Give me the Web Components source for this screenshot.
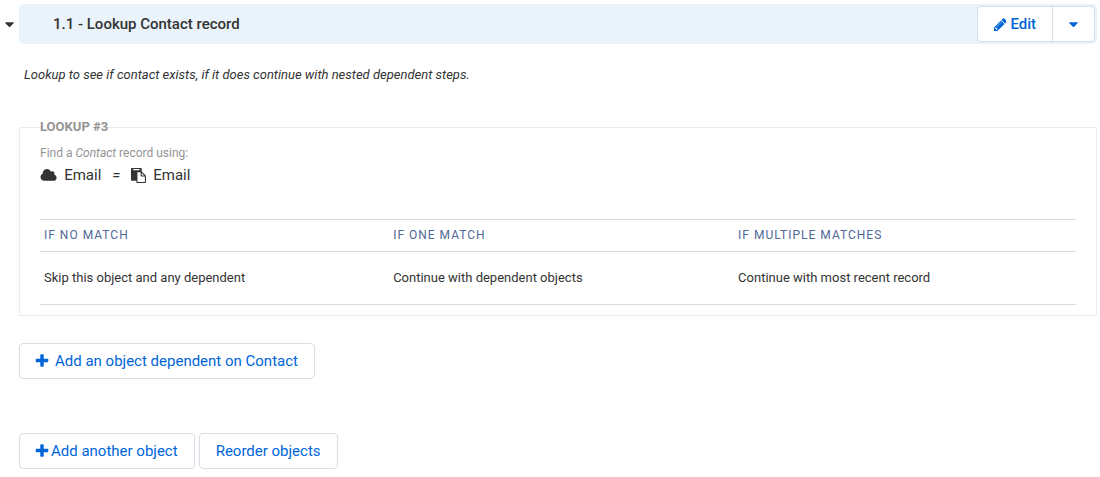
<!DOCTYPE html>
<html lang="en">
<head>
<meta charset="utf-8">
<meta name="viewport" content="width=device-width, initial-scale=1">
<title>Lookup Contact record</title>
<style>
  body { margin: 0; background: #fff; color: #333; font: 13px/20px Roboto, "Liberation Sans", sans-serif; }
</style>
</head>
<body>
<mapping-page>
  <object-step heading="1.1 - Lookup Contact record">
    <span slot="description">Lookup to see if contact exists, if it does continue with nested dependent steps.</span>
    <lookup-card heading="LOOKUP #3">
      <lookup-rule object="Contact" source="Email" target="Email"></lookup-rule>
      <match-table></match-table>
    </lookup-card>
    <action-button slot="actions" icon="plus" wide>Add an object dependent on Contact</action-button>
  </object-step>
  <action-button slot="footer" icon="plus">Add another object</action-button>
  <action-button slot="footer">Reorder objects</action-button>
</mapping-page>

<script>
const ICONS = {
  pencil: [1536, 'M363 1536l91-91-235-235-91 91v107h128v128h107zm523-928q0-22-22-22-10 0-17 7l-542 542q-7 7-7 17 0 22 22 22 10 0 17-7l542-542q7-7 7-17zm-54-192l416 416-832 832h-416v-416zm683 96q0 53-37 90l-166 166-416-416 166-165q36-38 90-38 53 0 91 38l235 234q37 39 37 91z'],
  caret: [1792, 'M1408 704q0 26-19 45l-448 448q-19 19-45 19t-45-19l-448-448q-19-19-19-45t19-45 45-19h896q26 0 45 19t19 45z'],
  cloud: [2048, 'M1984 1152q0 159-112.5 271.5t-271.5 112.5h-1088q-185 0-316.5-131.5t-131.5-316.5q0-132 71-241.5t187-163.5q-2-28-2-43 0-212 150-362t362-150q158 0 286.5 88t187.5 230q70-62 166-62 106 0 181 75t75 181q0 75-41 138 129 30 213 134.5t84 239.5z'],
  paste: [1792, 'M768 1664h896v-640h-416q-40 0-68-28t-28-68v-416h-384v1152zm256-1440v-64q0-13-9.5-22.5t-22.5-9.5h-704q-13 0-22.5 9.5t-9.5 22.5v64q0 13 9.5 22.5t22.5 9.5h704q13 0 22.5-9.5t9.5-22.5zm256 672h299l-299-299v299zm512 128v672q0 40-28 68t-68 28h-960q-40 0-68-28t-28-68v-160h-544q-40 0-68-28t-28-68v-1344q0-40 28-68t68-28h1088q40 0 68 28t28 68v328q21 13 36 28l408 408q28 28 48 76t20 88z'],
  plus: [1792, 'M1600 736v192q0 40-28 68t-68 28h-416v416q0 40-28 68t-68 28h-192q-40 0-68-28t-28-68v-416h-416q-40 0-68-28t-28-68v-192q0-40 28-68t68-28h416v-416q0-40 28-68t68-28h192q40 0 68 28t28 68v416h416q40 0 68 28t28 68z']
};

const define = (name, render) => customElements.define(name, class extends HTMLElement {
  connectedCallback() {
    if (this.shadowRoot) return;
    this.attachShadow({ mode: 'open' }).innerHTML = render(this);
  }
});

define('fa-icon', el => {
  const [width, path] = ICONS[el.getAttribute('name')];
  return `<style>
    :host { display: inline-flex; flex: none; }
    svg { height: var(--icon-size, 15px); fill: currentColor; }
  </style>
  <svg viewBox="0 0 ${width} 1792" aria-hidden="true"><path d="${path}"/></svg>`;
});

define('action-button', el => `<style>
    :host { display: inline-flex; }
    button { display: flex; align-items: center; gap: 1px; height: 36px; padding: 0 16px; font: inherit; font-size: 15px;
      color: #0065d8; background: #fff; border: 1px solid #d8dde6; border-radius: 4px; cursor: pointer; }
    :host([wide]) button { gap: 5px; }
    fa-icon { --icon-size: 16px; margin-left: -2px; }
  </style>
  <button type="button">${el.hasAttribute('icon') ? `<fa-icon name="${el.getAttribute('icon')}"></fa-icon>` : ''}<span><slot></slot></span></button>`);

define('split-button', () => `<style>
    :host { display: flex; }
    button { display: flex; align-items: center; justify-content: center; gap: 4px; height: 36px; padding: 0 16px; font: inherit;
      font-size: 15px; font-weight: 500; color: #0065d8; background: #fff; border: 1px solid #d8dde6; cursor: pointer; }
    .main { border-radius: 4px 0 0 4px; }
    .more { width: 43px; margin-left: -1px; padding: 0; border-radius: 0 4px 4px 0; }
  </style>
  <button class="main" type="button"><fa-icon name="pencil"></fa-icon><span><slot></slot></span></button>
  <button class="more" type="button" aria-label="More actions"><fa-icon name="caret"></fa-icon></button>`);

define('object-step', el => `<style>
    :host { display: block; }
    header { display: flex; align-items: center; }
    .toggle { flex: none; display: flex; justify-content: center; width: 19px; padding: 0; color: #333; background: none; border: 0; cursor: pointer; }
    .bar { flex: 1; display: flex; align-items: center; justify-content: space-between; min-height: 40px; padding: 0 2px 0 34px;
      box-sizing: border-box; background: #eaf2fa; border-radius: 5px; }
    h2 { margin: 0; font-size: 15px; font-weight: 500; line-height: 20px; }
    .body { padding-left: 19px; }
    p { margin: 21px 5px 32px; font-size: 13px; font-style: italic; }
    .actions { margin-top: 27px; }
  </style>
  <header>
    <button class="toggle" type="button" aria-label="Collapse step"><fa-icon name="caret"></fa-icon></button>
    <div class="bar"><h2>${el.getAttribute('heading')}</h2><split-button>Edit</split-button></div>
  </header>
  <div class="body">
    <p><slot name="description"></slot></p>
    <slot></slot>
    <div class="actions"><slot name="actions"></slot></div>
  </div>`);

define('lookup-card', el => `<style>
    :host { display: block; }
    fieldset { margin: 0; padding: 6px 20px 10px; border: 1px solid #ebebeb; }
    legend { padding: 0; color: #949494; font-size: 13px; font-weight: 700; line-height: 20px; }
  </style>
  <fieldset><legend>${el.getAttribute('heading')}</legend><slot></slot></fieldset>`);

define('lookup-rule', el => `<style>
    :host { display: block; }
    p { margin: 0; color: #949494; font-size: 12px; line-height: 20px; }
    .rule { display: flex; align-items: center; font-size: 15px; line-height: 24px; }
    .rule fa-icon { --icon-size: 15px; margin-right: 7px; }
    .operator { width: 30px; text-align: center; font-style: italic; }
  </style>
  <p>Find a <em>${el.getAttribute('object')}</em> record using:</p>
  <div class="rule">
    <fa-icon name="cloud"></fa-icon><span>${el.getAttribute('source')}</span>
    <span class="operator">=</span>
    <fa-icon name="paste"></fa-icon><span>${el.getAttribute('target')}</span>
  </div>`);

define('match-table', () => `<style>
    :host { display: block; margin-top: 32px; }
    table { width: 100%; table-layout: fixed; border-collapse: collapse; font-size: 13px; line-height: 20px; }
    th, td { box-sizing: border-box; padding: 0 4px; text-align: left; border: solid #d8dae6; border-width: 1px 0; }
    th { height: 32px; padding-bottom: 2px; color: #4f6896; font-size: 12px; font-weight: 400; letter-spacing: 1px; }
    th:nth-child(1) { width: 33.7%; }
    th:nth-child(2) { width: 33.3%; }
    td { height: 53px; }
  </style>
  <table>
    <thead><tr><th scope="col">IF NO MATCH</th><th scope="col">IF ONE MATCH</th><th scope="col">IF MULTIPLE MATCHES</th></tr></thead>
    <tbody><tr><td>Skip this object and any dependent</td><td>Continue with dependent objects</td><td>Continue with most recent record</td></tr></tbody>
  </table>`);

define('mapping-page', () => `<style>
    :host { display: block; padding: 4px 3px 8px 0; }
    footer { display: flex; flex-wrap: wrap; gap: 4px; margin-top: 54px; padding-left: 19px; }
  </style>
  <main><slot></slot></main>
  <footer><slot name="footer"></slot></footer>`);
</script>
</body>
</html>
